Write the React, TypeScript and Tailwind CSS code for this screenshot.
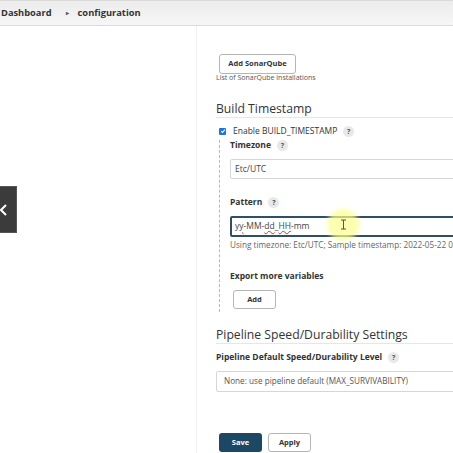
import React from "react";

function Help() {
  return (
    <span className="ml-[6px] inline-flex h-[11px] w-[11px] items-center justify-center rounded-full bg-[#e8e8e8] text-[7px] font-bold leading-none text-[#555]">
      ?
    </span>
  );
}

function Heading({ children, className }: { children: React.ReactNode; className: string }) {
  return (
    <div className={`${className} h-[17px] border-b border-[#e6e6e6] text-[12.2px] leading-[16px] text-[#333]`}>
      {children}
    </div>
  );
}

export default function App() {
  return (
    <div className="relative h-[453px] w-[453px] overflow-hidden bg-white font-['Open_Sans',sans-serif] text-[#333]">
      <header className="flex h-[26px] items-center border-y border-[#dadada] bg-gradient-to-b from-[#ececec] to-[#f6f6f6] text-[9.3px] font-bold text-[#333]">
        <span className="pl-[1px]">Dashboard</span>
        <span className="ml-[14px] text-[6px] text-[#555]">▸</span>
        <span className="ml-[9px]">configuration</span>
      </header>

      <div className="flex">
        <aside className="h-[427px] w-[197px] border-r border-[#f1f1f1]" />

        <main className="w-[256px] overflow-hidden pl-[19px] pt-[28px]">
          <button className="ml-[3px] block h-[20px] w-[77px] rounded-[3px] border border-[#b5b5b5] text-[7.5px] font-bold text-[#333]">
            Add SonarQube
          </button>
          <div className="text-[7px] leading-[8px] text-[#555]">List of SonarQube installations</div>

          <Heading className="mt-[19px]">Build Timestamp</Heading>

          <div className="mt-[7px] flex h-[12px] items-center text-[8.5px]">
            <span className="ml-[3px] flex h-[7px] w-[7px] items-center justify-center rounded-[1px] bg-[#1a73e8]">
              <svg width="6" height="6" viewBox="0 0 10 10">
                <path d="M2 5.2 L4.2 7.4 L8.2 2.8" stroke="white" strokeWidth="1.8" fill="none" />
              </svg>
            </span>
            <span className="ml-[7px]">Enable BUILD_TIMESTAMP</span>
            <Help />
          </div>

          <div className="ml-[3px] mt-[3px] border-l border-dashed border-[#b8b8b8] pb-[3px] pl-[10px]">
            <div className="flex h-[10px] items-center text-[8.5px] font-bold">
              Timezone
              <Help />
            </div>
            <div className="mt-[9px] flex h-[20px] w-[260px] items-center rounded-[2px] border border-[#d6d6d6] pl-[4px] text-[8.5px] text-[#444]">
              Etc/UTC
            </div>

            <div className="mt-[18px] flex h-[10px] items-center text-[8.5px] font-bold">
              Pattern
              <Help />
            </div>
            <div className="mt-[9px] flex h-[21px] w-[260px] items-center rounded-[2px] border-2 border-[#2e4f66] pl-[3px] text-[8.5px] text-[#444]">
              <span className="underline decoration-[#d93025] decoration-wavy decoration-1">yy</span>
              -MM-
              <span className="underline decoration-[#d93025] decoration-wavy decoration-1">dd</span>_
              <span className="underline decoration-[#d93025] decoration-wavy decoration-1">HH</span>
              -mm
            </div>
            <div className="mt-[3px] flex h-[10px] items-center whitespace-nowrap text-[8.2px] text-[#666]">
              Using timezone: Etc/UTC; Sample timestamp: 2022-05-22 0
            </div>

            <div className="mt-[21px] flex h-[10px] items-center text-[8.5px] font-bold">
              Export more variables
            </div>
            <button className="ml-[3px] mt-[9px] block h-[19px] w-[43px] rounded-[3px] border border-[#b5b5b5] text-[7.5px] font-bold text-[#333]">
              Add
            </button>
          </div>

          <Heading className="mt-[15px]">Pipeline Speed/Durability Settings</Heading>

          <div className="mt-[8px] flex h-[10px] items-center text-[8.5px] font-bold">
            Pipeline Default Speed/Durability Level
            <Help />
          </div>
          <div className="mt-[9px] flex h-[21px] w-[260px] items-center rounded-[2px] border border-[#d6d6d6] pl-[7px] text-[8.2px] text-[#555]">
            None: use pipeline default (MAX_SURVIVABILITY)
          </div>

          <div className="ml-[3px] mt-[41px] flex gap-[6px]">
            <button className="block h-[19px] w-[43px] rounded-[3px] bg-[#1c4865] text-[7.5px] font-bold text-white">
              Save
            </button>
            <button className="block h-[19px] w-[43px] rounded-[3px] border border-[#b5b5b5] text-[7.5px] font-bold text-[#333]">
              Apply
            </button>
          </div>
        </main>
      </div>

      {/* side panel toggle */}
      <div className="absolute left-0 top-[186px] flex h-[47px] w-[17px] items-center border border-l-0 border-[#555] bg-[#3b3b3b]">
        <svg width="8" height="14" viewBox="0 0 8 14">
          <path d="M6 2 L1 7 L6 12" stroke="white" strokeWidth="2" fill="none" />
        </svg>
      </div>

      {/* mouse highlight */}
      <div className="absolute left-[327px] top-[209px] h-[32px] w-[32px] rounded-full bg-[#fbff8a]/70 blur-[2px]" />
      <svg className="absolute left-[340px] top-[219px]" width="7" height="11" viewBox="0 0 7 11">
        <path d="M1 1 H6 M3.5 1 V10 M1 10 H6" stroke="#555" strokeWidth="1" fill="none" />
      </svg>
    </div>
  );
}
